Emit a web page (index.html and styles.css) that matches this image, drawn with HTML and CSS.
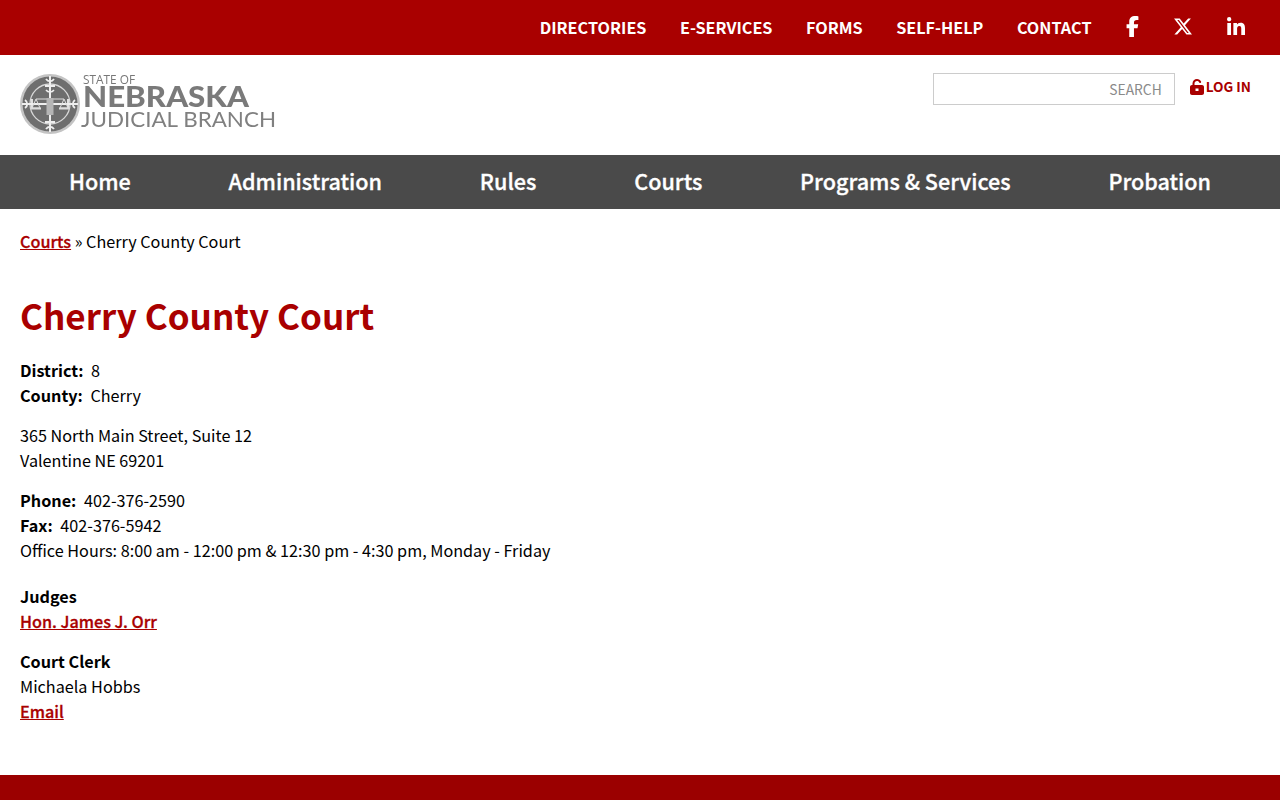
FILE: index.html
```html
<!DOCTYPE html>
<html lang="en">
<head>
  <meta charset="UTF-8" />
  <meta name="viewport" content="width=device-width, initial-scale=1.0" />
  <title>Cherry County Court</title>
  <link rel="stylesheet" href="styles.css">
</head>
<body>
  <div class="topbar">
    <a href="#">DIRECTORIES</a>
    <a href="#">E-SERVICES</a>
    <a href="#">FORMS</a>
    <a href="#">SELF-HELP</a>
    <a href="#">CONTACT</a>
    <div class="social">
      <a href="#" aria-label="Facebook">
        <svg width="13" height="21" viewBox="0 0 320 512"><path d="M80 299.300V512H196V299.300h86.500l18-97.800H196V166.900c0-51.700 20.300-71.500 72.700-71.500c16.300 0 29.400.4 37 1.200V7.900C291.400 4 256.400 0 236.200 0C129.300 0 80 50.500 80 134.400v67.100H14v97.800H80z" fill="#fff"/></svg>
      </a>
      <a href="#" aria-label="X">
        <svg width="18" height="17" viewBox="26 48 461 416"><path d="M389.200 48h70.600L305.600 224.200 487 464H345L233.700 318.600 106.500 464H35.800L200.700 275.500 26.800 48H172.400L272.900 180.900 389.200 48zM364.400 421.800h39.100L151.100 88h-42L364.400 421.800z" fill="#fff"/></svg>
      </a>
      <a href="#" aria-label="LinkedIn">
        <svg width="18" height="18" viewBox="0 0 448 448"><path d="M100.280 448H7.400V148.900h92.880zM53.790 108.100C24.090 108.100 0 83.500 0 53.800a53.790 53.790 0 0 1 107.580 0c0 29.700-24.100 54.300-53.790 54.300zM447.900 448h-92.680V302.400c0-34.700-.7-79.200-48.290-79.200-48.290 0-55.690 37.700-55.690 76.700V448h-92.780V148.900h89.080v40.800h1.300c12.400-23.500 42.690-48.300 87.880-48.300 94 0 111.280 61.900 111.280 142.300V448z" fill="#fff"/></svg>
      </a>
    </div>
  </div>

  <header class="masthead">
    <a href="#" class="logo">
      <svg width="258" height="64" viewBox="0 0 258 64">
        <circle cx="30" cy="31" r="30" fill="#c4c4c4"/>
        <circle cx="30" cy="31" r="27.500" fill="#6e6e6e"/>
        <circle cx="30" cy="31" r="20" fill="none" stroke="#d8d8d8" stroke-width="1.300"/>
        <path d="M30 3v56M2 31h56" stroke="#eee" stroke-width="2"/>
        <path d="M26 6c2 3 6 3 8 0M26 56c2-3 6-3 8 0M5 27c3 2 3 6 0 8M55 27c-3 2-3 6 0 8M25 13h10M25 49h10M12 26v10M48 26v10" fill="none" stroke="#eee" stroke-width="1.800"/>
        <path d="M26 17a5 5 0 0 0 8 0" fill="none" stroke="#eee" stroke-width="1.500"/>
        <path d="M16 26h28M16 26l-4 9h8zM44 26l-4 9h8z" fill="none" stroke="#ddd" stroke-width="1"/>
        <path d="M11 35.500h10M39 35.500h10" stroke="#ddd" stroke-width="2"/>
        <rect x="26.500" y="25" width="7" height="17" fill="#b5b5b5"/>
        <text x="63" y="11" class="logo-small" textLength="52" lengthAdjust="spacingAndGlyphs">STATE OF</text>
        <text x="63" y="34" class="logo-big" textLength="166" lengthAdjust="spacingAndGlyphs">NEBRASKA</text>
        <text x="61" y="54" class="logo-mid" textLength="195" lengthAdjust="spacingAndGlyphs">JUDICIAL BRANCH</text>
      </svg>
    </a>
    <div class="tools">
      <div class="search">SEARCH</div>
      <a href="#" class="login">
        <svg width="14" height="16" viewBox="0 0 448 512"><path d="M144 144c0-44.200 35.800-80 80-80c31.900 0 59.400 18.600 72.300 45.700c7.600 16 26.700 22.800 42.600 15.200s22.800-26.700 15.200-42.600C331 33.700 281.500 0 224 0C144.500 0 80 64.500 80 144v48H64c-35.300 0-64 28.700-64 64V448c0 35.300 28.700 64 64 64H384c35.300 0 64-28.700 64-64V256c0-35.300-28.700-64-64-64H144V144z" fill="#a90000"/><rect x="176" y="304" width="96" height="80" fill="#fff"/></svg>
        LOG IN
      </a>
    </div>
  </header>

  <nav class="mainnav">
    <a href="#">Home</a>
    <a href="#">Administration</a>
    <a href="#">Rules</a>
    <a href="#">Courts</a>
    <a href="#">Programs &amp; Services</a>
    <a href="#">Probation</a>
  </nav>

  <main class="content">
    <p class="crumbs"><a href="#">Courts</a> » Cherry County Court</p>
    <h1>Cherry County Court</h1>

    <p><b>District:</b> 8<br><b>County:</b> Cherry</p>
    <p>365 North Main Street, Suite 12<br>Valentine NE 69201</p>
    <p class="hours"><b>Phone:</b> 402-376-2590<br><b>Fax:</b> 402-376-5942<br>Office Hours: 8:00 am - 12:00 pm &amp; 12:30 pm - 4:30 pm, Monday - Friday</p>
    <p><b>Judges</b><br><a href="#">Hon. James J. Orr</a></p>
    <p><b>Court Clerk</b><br>Michaela Hobbs<br><a href="#">Email</a></p>
  </main>

  <footer class="footer"></footer>
</body>
</html>
```

FILE: styles.css
```css
:root {
  --red: #a90000;
  --grey: #4a4a4a;
  font-family: "Noto Sans CJK SC", "Open Sans", sans-serif;
}
html, body {
  height: 100%;
}
body {
  margin: 0;
  display: flex;
  flex-direction: column;
  min-height: 800px;
  overflow: hidden;
  color: #000;
  font-size: 16.2px;
  line-height: 25.2px;
}
a {
  color: var(--red);
}

.topbar {
  height: 55px;
  background: var(--red);
  display: flex;
  justify-content: flex-end;
  align-items: center;
  gap: 33.5px;
  padding-right: 35px;
}
.topbar a {
  color: #fff;
  font-weight: 700;
  font-size: 16.2px;
  text-decoration: none;
}
.social {
  display: flex;
  align-items: center;
  gap: 35px;
  margin-left: 1px;
  margin-top: -3px;
}
.social a {
  display: flex;
}

.masthead {
  height: 100px;
  display: flex;
  justify-content: space-between;
  padding: 0 29px 0 20px;
}
.logo {
  margin-top: 18px;
  filter: blur(0.4px);
}
.logo-small {
  font: 400 12px "Open Sans", sans-serif;
  fill: #777;
}
.logo-big {
  font: 900 28px "Lato", sans-serif;
  fill: #7a7a7a;
}
.logo-mid {
  font: 400 21px "Lato", sans-serif;
  fill: #808080;
}
.tools {
  display: flex;
  align-items: flex-start;
  gap: 15px;
  margin-top: 18px;
}
.search {
  box-sizing: border-box;
  width: 242px;
  height: 32px;
  border: 1px solid #ccc;
  padding-right: 12px;
  text-align: right;
  color: #8a8a8a;
  font-size: 13.8px;
  line-height: 31px;
}
.login {
  display: flex;
  align-items: center;
  gap: 2px;
  height: 28px;
  font-size: 13.6px;
  font-weight: 700;
  text-decoration: none;
}

.mainnav {
  height: 54px;
  background: var(--grey);
  display: flex;
  justify-content: space-around;
  align-items: center;
  padding: 0 20px 3px;
  box-sizing: border-box;
}
.mainnav a {
  color: #fff;
  font-size: 21.6px;
  font-weight: 500;
  -webkit-text-stroke: 0.3px #fff;
  text-decoration: none;
}

.content {
  flex: 1;
  padding: 19.5px 20px 0;
}
.content p {
  margin: 0 0 14.5px;
}
.content a {
  font-weight: 500;
  -webkit-text-stroke: 0.3px var(--red);
}
.content b {
  margin-right: 4px;
}
h1 {
  margin: 36.5px 0 18px;
  color: var(--red);
  font-size: 35px;
  line-height: 50px;
  font-weight: 700;
}
.content .hours {
  margin-bottom: 20.4px;
}

.footer {
  height: 25px;
  background: #9b0000;
}
```
